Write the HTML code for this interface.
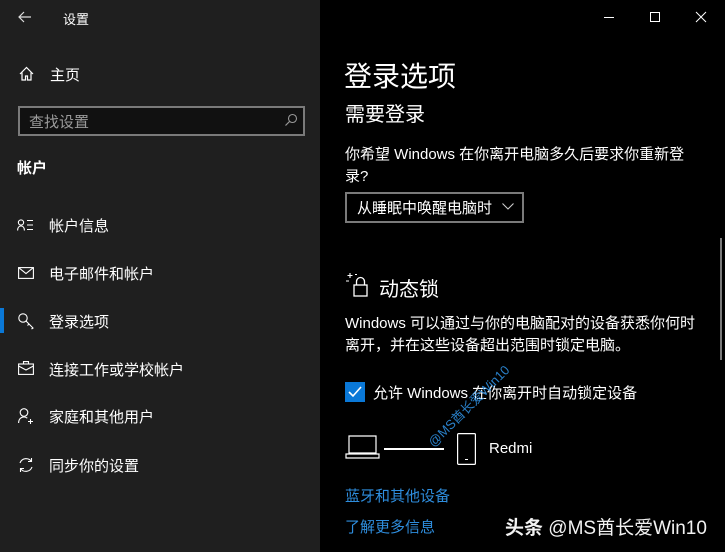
<!DOCTYPE html>
<html><head><meta charset="utf-8"><style>
*{margin:0;padding:0;box-sizing:border-box}
body{width:725px;height:552px;overflow:hidden;background:#000;font-family:"Liberation Sans","Noto Sans CJK SC",sans-serif;color:#fff;position:relative}
.l{position:absolute;left:0;top:0;width:320px;height:552px;background:#1f1f1f}
.a{position:absolute;white-space:nowrap}
svg{position:absolute;overflow:visible}
.nav{font-size:15px}
.blue{color:#2e8ddd}
</style></head><body>
<div class="l"></div>
<svg style="left:18px;top:10px" width="14" height="14" viewBox="0 0 14 14"><path d="M13 7H1M6 2L1 7l5 5" fill="none" stroke="#ddd" stroke-width="1.2"/></svg>
<div class="a" style="left:63px;top:9px;font-size:13px">设置</div>
<svg style="left:19px;top:66px" width="15" height="15" viewBox="0 0 15 15"><path d="M1 8L7.5 1.5 14 8M3 6.5V14h3.5V10h2v4H12V6.5" fill="none" stroke="#fff" stroke-width="1.2"/></svg>
<div class="a nav" style="left:50px;top:64px">主页</div>
<div class="a" style="left:18px;top:106px;width:287px;height:30px;border:2px solid #7a7a7a;background:#111"></div>
<div class="a" style="left:29px;top:111px;font-size:15px;color:#9a9a9a">查找设置</div>
<svg style="left:284px;top:113px" width="14" height="14" viewBox="0 0 14 14"><circle cx="8.5" cy="5.5" r="4" fill="none" stroke="#999" stroke-width="1.1"/><path d="M5.5 8.5L1.5 12.5" stroke="#999" stroke-width="1.2"/></svg>
<div class="a" style="left:17px;top:157px;font-size:15px;font-weight:bold">帐户</div>

<svg style="left:17px;top:219px" width="17" height="12" viewBox="0 0 17 12"><circle cx="4" cy="3.5" r="2.6" fill="none" stroke="#fff" stroke-width="1.1"/><path d="M0.6 11.5c0-3 1.5-4.5 3.4-4.5s3.4 1.5 3.4 4.5M10 1.5h6M10 6h6M10 10.5h6" fill="none" stroke="#fff" stroke-width="1.1"/></svg>
<div class="a nav" style="left:49px;top:215px">帐户信息</div>
<svg style="left:18px;top:267px" width="16" height="12" viewBox="0 0 16 12"><rect x="0.6" y="0.6" width="14.8" height="10.8" fill="none" stroke="#fff" stroke-width="1.1"/><path d="M0.6 0.6L8 6.5 15.4 0.6" fill="none" stroke="#fff" stroke-width="1.1"/></svg>
<div class="a nav" style="left:49px;top:263px">电子邮件和帐户</div>
<div class="a" style="left:0;top:308px;width:4px;height:25px;background:#0a78d7"></div>
<svg style="left:18px;top:313px" width="16" height="16" viewBox="0 0 16 16"><circle cx="5" cy="5" r="4.2" fill="none" stroke="#fff" stroke-width="1.1"/><path d="M8 8l7 7-1.5 1M11 11l-1.5 1.5" fill="none" stroke="#fff" stroke-width="1.1"/></svg>
<div class="a nav" style="left:49px;top:311px">登录选项</div>
<svg style="left:18px;top:361px" width="16" height="14" viewBox="0 0 16 14"><rect x="0.6" y="3" width="14.8" height="10.4" fill="none" stroke="#fff" stroke-width="1.1"/><path d="M5.5 3V0.6h5V3M0.6 5l7.4 4 7.4-4" fill="none" stroke="#fff" stroke-width="1.1"/></svg>
<div class="a nav" style="left:49px;top:359px">连接工作或学校帐户</div>
<svg style="left:18px;top:408px" width="16" height="16" viewBox="0 0 16 16"><circle cx="6" cy="4.5" r="3.8" fill="none" stroke="#fff" stroke-width="1.1"/><path d="M0.6 15c0-4 2.5-6 5.4-6 1.5 0 2.5.5 3.3 1.2M12.5 11v5M10 13.5h5" fill="none" stroke="#fff" stroke-width="1.1"/></svg>
<div class="a nav" style="left:49px;top:406px">家庭和其他用户</div>
<svg style="left:18px;top:457px" width="16" height="16" viewBox="0 0 16 16"><path d="M2 6A6.5 6.5 0 0 1 13.5 4.5M14 10A6.5 6.5 0 0 1 2.5 11.5M13.5 1v3.5H10M2.5 15v-3.5H6" fill="none" stroke="#fff" stroke-width="1.1"/></svg>
<div class="a nav" style="left:49px;top:455px">同步你的设置</div>

<svg style="left:604px;top:17px" width="10" height="2"><path d="M0 0.5h10" stroke="#fff"/></svg>
<svg style="left:650px;top:12px" width="10" height="10"><rect x="0.5" y="0.5" width="9" height="9" fill="none" stroke="#fff"/></svg>
<svg style="left:696px;top:12px" width="10" height="10"><path d="M0 0l10 10M10 0L0 10" stroke="#fff"/></svg>

<div class="a" style="left:344px;top:55px;font-size:28px">登录选项</div>
<div class="a" style="left:345px;top:98px;font-size:20px">需要登录</div>
<div class="a" style="left:345px;top:144px;font-size:15px;line-height:22px">你希望 Windows 在你离开电脑多久后要求你重新登<br>录?</div>
<div class="a" style="left:345px;top:192px;width:179px;height:31px;border:2px solid #7a7a7a"></div>
<div class="a" style="left:357px;top:197px;font-size:15px">从睡眠中唤醒电脑时</div>
<svg style="left:502px;top:203px" width="12" height="7"><path d="M0.5 0.5L6 6l5.5-5.5" fill="none" stroke="#ccc" stroke-width="1.1"/></svg>
<div class="a" style="left:720px;top:238px;width:2px;height:122px;background:#7a7a7a"></div>

<svg style="left:345px;top:273px" width="25" height="25" viewBox="0 0 25 25"><path d="M5 0v5M2.5 2.5h5M1 8h3M10 1.5h2" stroke="#fff" stroke-width="1.1"/><rect x="9" y="12" width="13" height="11" fill="none" stroke="#fff" stroke-width="1.3"/><path d="M11.5 12V8.5a4 4 0 0 1 8 0V12" fill="none" stroke="#fff" stroke-width="1.3"/></svg>
<div class="a" style="left:379px;top:273px;font-size:20px">动态锁</div>
<div class="a" style="left:345px;top:313px;font-size:15px;line-height:22px">Windows 可以通过与你的电脑配对的设备获悉你何时<br>离开，并在这些设备超出范围时锁定电脑。</div>
<div class="a" style="left:345px;top:382px;width:20px;height:20px;background:#0a78d7"></div>
<svg style="left:348px;top:386px" width="14" height="12"><path d="M1 6l4 4 8-9" fill="none" stroke="#fff" stroke-width="1.6"/></svg>
<div class="a" style="left:373px;top:382px;font-size:15px">允许 Windows 在你离开时自动锁定设备</div>
<div class="a blue" style="left:423px;top:437px;font-size:13px;transform:rotate(-45deg);transform-origin:left top;opacity:.9">@MS酋长爱Win10</div>
<svg style="left:345px;top:435px" width="35" height="25" viewBox="0 0 35 25"><path d="M4 1h27v17H4zM1 23h33v-4H1z" fill="none" stroke="#fff" stroke-width="1.2"/></svg>
<div class="a" style="left:384px;top:448px;width:60px;height:1.5px;background:#fff"></div>
<svg style="left:457px;top:433px" width="19" height="32" viewBox="0 0 19 32"><rect x="0.6" y="0.6" width="17.8" height="30.8" rx="1" fill="none" stroke="#fff" stroke-width="1.2"/><path d="M8 26.5h3" stroke="#fff"/></svg>
<div class="a" style="left:489px;top:440px;font-size:15px">Redmi</div>
<div class="a blue" style="left:345px;top:485px;font-size:15px">蓝牙和其他设备</div>
<div class="a blue" style="left:345px;top:516px;font-size:15px">了解更多信息</div>
<div class="a" style="left:505px;top:513px;font-size:19px;font-weight:bold;color:#f2f2f2">头条 <span style="font-weight:normal">@MS酋长爱Win10</span></div>
</body></html>
